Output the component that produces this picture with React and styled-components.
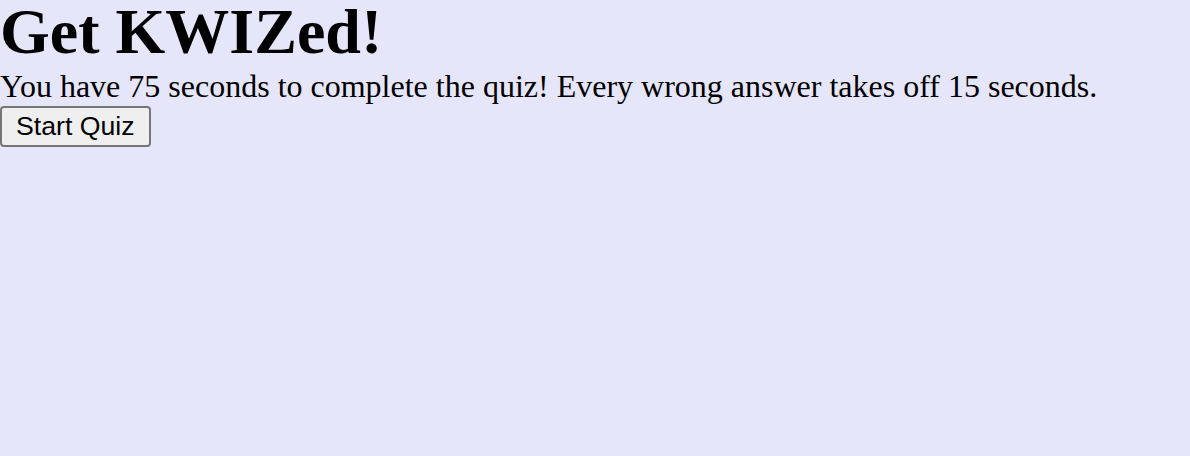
import React from 'react';
import styled, { createGlobalStyle } from 'styled-components';

const GlobalStyle = createGlobalStyle`
  html, body {
    margin: 0;
    padding: 0;
    background-color: #E6E6FA;
    font-family: "Liberation Serif", "Times New Roman", serif;
  }
`;

const Page = styled.main`
  min-height: 456px;
  background-color: #E6E6FA;
`;

const Title = styled.h1`
  margin: 0 0 5px;
  font-size: 64px;
  line-height: 1;
  font-weight: bold;
  color: #000;
`;

const Intro = styled.p`
  margin: 0 0 2px;
  font-size: 32px;
  line-height: 1.1;
  color: #000;
`;

const StartButton = styled.button`
  font-family: "Liberation Sans", Arial, sans-serif;
  font-size: 26.67px;
  line-height: normal;
  padding: 3px 14px;
  background-color: #EFEFEF;
  color: #000;
  border: 2px solid #767676;
  border-radius: 4px;
  cursor: pointer;
`;

const App = () => {
  return (
    <Page>
      <GlobalStyle />
      <Title>Get KWIZed!</Title>
      <Intro>You have 75 seconds to complete the quiz! Every wrong answer takes off 15 seconds.</Intro>
      <StartButton>Start Quiz</StartButton>
    </Page>
  );
};

export default App;
